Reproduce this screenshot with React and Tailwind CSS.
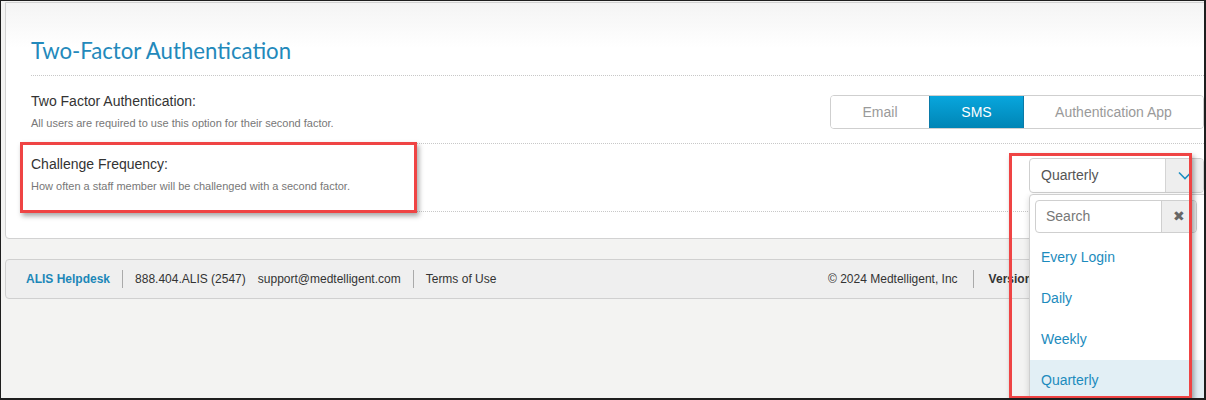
import React from "react";

function Chevron() {
  return (
    <svg width="14" height="9" viewBox="0 0 14 9" fill="none">
      <path d="M1 1.5 L7 7.5 L13 1.5" stroke="#1d8fc2" strokeWidth="1.6" />
    </svg>
  );
}

export default function App() {
  return (
    <div
      className="relative w-[1206px] h-[400px] overflow-hidden bg-[#f3f3f2] border-l border-t border-r-2 border-b-2 border-[#1e1e1e] font-['Liberation_Sans',Arial,sans-serif]"
    >
      {/* Card */}
      <div className="ml-[4px] mr-[-26px] mt-[1px] border border-[#d2d2d2] rounded-b-[4px] bg-[linear-gradient(#f4f4f4,#ffffff_45px)] pl-[25px] pr-[25px] pt-[33px] pb-[26px]">
        <h1 className="font-['Lato',sans-serif] text-[22.2px] leading-[30px] text-[#2389bb] pb-[9px] border-b border-dotted border-[#c8c8c8]">
          Two-Factor Authentication
        </h1>

        {/* Row 1 */}
        <div className="flex justify-between border-b border-dotted border-[#c8c8c8] h-[68px]">
          <div className="pt-[15px]">
            <div className="text-[14px] leading-[20px] text-[#333]">Two Factor Authentication:</div>
            <div className="mt-[4px] text-[11px] leading-[16px] text-[#777]">
              All users are required to use this option for their second factor.
            </div>
          </div>
          <div className="mt-[19px] self-start flex h-[34px] border border-[#cfcfcf] rounded-[4px] overflow-hidden text-[14px]">
            <div className="w-[98px] flex items-center justify-center text-[#9a9a9a] bg-white">Email</div>
            <div className="w-[95px] flex items-center justify-center text-white bg-[linear-gradient(#08a6dd,#0085b5)] border-x border-[#0a7aa8]">
              SMS
            </div>
            <div className="w-[179px] flex items-center justify-center text-[#9a9a9a] bg-white">Authentication App</div>
          </div>
        </div>

        {/* Row 2 */}
        <div className="flex justify-between border-b border-dotted border-[#c8c8c8] h-[68px]">
          <div className="pt-[10px]">
            <div className="text-[14px] leading-[20px] text-[#333]">Challenge Frequency:</div>
            <div className="mt-[4px] text-[11px] leading-[16px] text-[#777]">
              How often a staff member will be challenged with a second factor.
            </div>
          </div>
          <div className="mt-[14px] self-start flex w-[175px] h-[35px] border border-[#cfcfcf] rounded-[4px] overflow-hidden bg-white">
            <div className="flex-1 flex items-center pl-[11px] text-[14px] text-[#555]">Quarterly</div>
            <div className="w-[38px] flex items-center justify-center bg-[#eeeeee] border-l border-[#d4d4d4]">
              <Chevron />
            </div>
          </div>
        </div>
      </div>

      {/* Footer */}
      <div className="ml-[4px] mr-[-26px] mt-[20px] h-[40px] border border-[#d0d0d0] rounded-[4px] bg-[#efefef] flex items-center text-[12px] text-[#333] pl-[20px]">
        <span className="font-bold text-[#1c87b8]">ALIS Helpdesk</span>
        <span className="mx-[12px] w-px h-[18px] bg-[#aaa]" />
        <span>888.404.ALIS (2547)</span>
        <span className="ml-[12px]">support@medtelligent.com</span>
        <span className="mx-[12px] w-px h-[18px] bg-[#aaa]" />
        <span>Terms of Use</span>
        <span className="ml-auto">© 2024 Medtelligent, Inc</span>
        <span className="mx-[15px] w-px h-[18px] bg-[#aaa]" />
        <span className="font-bold mr-[167px]">Version 7.4.2</span>
      </div>

      {/* Dropdown panel */}
      <div className="absolute left-[1028px] top-[193px] w-[200px] h-[220px] bg-white border border-[#cfcfcf] rounded-[4px] shadow-[0_2px_6px_rgba(0,0,0,0.15)]">
        <div className="mx-[5px] mt-[5px] w-[162px] h-[33px] flex border border-[#cfcfcf] rounded-[4px] overflow-hidden">
          <div className="flex-1 flex items-center pl-[10px] text-[14px] text-[#777]">Search</div>
          <div className="w-[35px] flex items-center justify-center bg-[#eeeeee] border-l border-[#cfcfcf] text-[#666] text-[14px]">
            ✖
          </div>
        </div>
        <div className="mt-[4px]">
          {["Every Login", "Daily", "Weekly", "Quarterly"].map((o, i) => (
            <div
              key={o}
              className={`h-[41px] flex items-center pl-[11px] text-[14px] text-[#1c8bbd] ${i === 3 ? "bg-[#e2eff5]" : ""}`}
            >
              {o}
            </div>
          ))}
        </div>
      </div>

      {/* Annotation boxes */}
      <div className="absolute left-[19px] top-[141px] w-[397px] h-[71px] border-[3px] border-[#ef4444] shadow-[2px_3px_5px_rgba(0,0,0,0.35)]" />
      <div className="absolute left-[1008px] top-[152px] w-[183px] h-[246px] border-[3px] border-[#ef4444] shadow-[2px_3px_5px_rgba(0,0,0,0.35)]" />
    </div>
  );
}
